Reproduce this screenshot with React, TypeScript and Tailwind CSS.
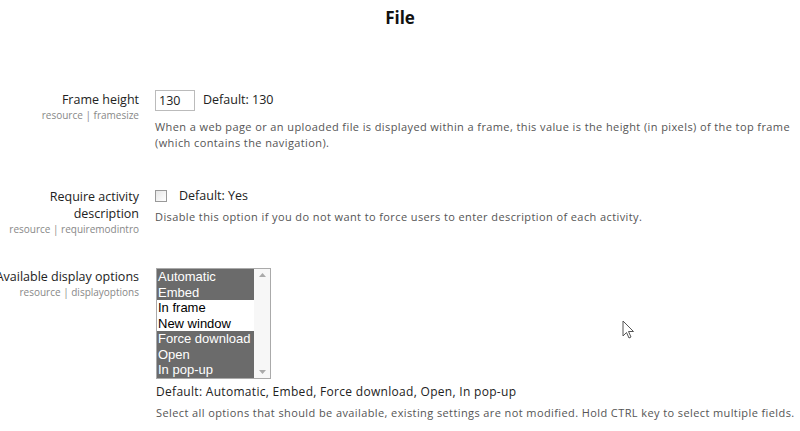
const font = { fontFamily: '"Open Sans", "DejaVu Sans", sans-serif' };

function Label({ title, sub }: { title: string[]; sub: string }) {
  return (
    <div className="w-[140px] shrink-0 pr-[1px] flex flex-col items-end">
      {title.map((t) => (
        <div key={t} className="flex justify-end w-full whitespace-nowrap text-[12.5px] leading-[17px] text-[#222]">
          {t}
        </div>
      ))}
      <div className="flex justify-end w-full whitespace-nowrap text-[10px] leading-[14px] text-[#888]">{sub}</div>
    </div>
  );
}

const options = [
  { name: "Automatic", on: true },
  { name: "Embed", on: true },
  { name: "In frame", on: false },
  { name: "New window", on: false },
  { name: "Force download", on: true },
  { name: "Open", on: true },
  { name: "In pop-up", on: true },
];

export default function App() {
  return (
    <div className="relative w-[800px] h-[431px] bg-white overflow-hidden" style={font}>
      <h2 className="pt-[5px] text-center text-[17px] leading-[26px] font-bold text-[#111]">File</h2>

      <div className="mt-[59px] flex gap-[15px]">
        <div className="pt-[1px]">
          <Label title={["Frame height"]} sub="resource | framesize" />
        </div>
        <div className="flex-1">
          <div className="flex items-center gap-[8px]">
            <div className="w-[40px] h-[21px] border border-[#bbb] px-[3px] text-[12.5px] leading-[19px] text-[#222]">130</div>
            <span className="text-[12.5px] text-[#222]">Default: 130</span>
          </div>
          <p className="mt-[8px] pr-[8px] text-[11px] leading-[16px] tracking-[0.4px] text-[#555]">
            When a web page or an uploaded file is displayed within a frame, this value is the height (in pixels) of the top frame (which contains the navigation).
          </p>
        </div>
      </div>

      <div className="mt-[37px] flex gap-[15px]">
        <Label title={["Require activity", "description"]} sub="resource | requiremodintro" />
        <div className="flex-1">
          <div className="flex items-center h-[14px] mt-[1px]">
            <div className="w-[12px] h-[12px] border border-[#999] bg-gradient-to-br from-[#e6e6e6] to-white" />
            <span className="ml-[12px] text-[12.5px] text-[#222]">Default: Yes</span>
          </div>
          <p className="mt-[6px] text-[11px] leading-[16px] tracking-[0.4px] text-[#555]">
            Disable this option if you do not want to force users to enter description of each activity.
          </p>
        </div>
      </div>

      <div className="mt-[32px] flex gap-[15px]">
        <Label title={["Available display options"]} sub="resource | displayoptions" />
        <div className="flex-1 pl-[1px]">
          <div className="w-[115px] h-[111px] border border-[#aaa] flex bg-white">
            <div className="flex-1" style={{ fontFamily: '"Liberation Sans", Arial, sans-serif' }}>
              {options.map((o) => (
                <div
                  key={o.name}
                  className={`h-[15.5px] pl-[1px] text-[13px] leading-[15.5px] whitespace-nowrap ${o.on ? "bg-[#6b6b6b] text-white" : "text-black"}`}
                >
                  {o.name}
                </div>
              ))}
            </div>
            <div className="w-[16px] flex flex-col justify-between items-center py-[4px] bg-[#f7f7f7]">
              <svg width="7" height="4" viewBox="0 0 7 4"><path d="M0 4 L3.5 0 L7 4 Z" fill="#aaa" /></svg>
              <svg width="7" height="4" viewBox="0 0 7 4"><path d="M0 0 L3.5 4 L7 0 Z" fill="#aaa" /></svg>
            </div>
          </div>
          <div className="mt-[5px] text-[12px] leading-[16px] tracking-[0.3px] text-[#222]">Default: Automatic, Embed, Force download, Open, In pop-up</div>
          <p className="mt-[5px] text-[11px] leading-[16px] tracking-[0.4px] text-[#555] whitespace-nowrap">
            Select all options that should be available, existing settings are not modified. Hold CTRL key to select multiple fields.
          </p>
        </div>
      </div>

      <svg className="absolute left-[622px] top-[320px]" width="13" height="20" viewBox="0 0 13 20">
        <path d="M1 1 L1 16 L4.5 12.5 L7 18 L9 17 L6.5 11.5 L11.5 11.5 Z" fill="white" stroke="#555" strokeWidth="1" strokeLinejoin="round" />
      </svg>
    </div>
  );
}
